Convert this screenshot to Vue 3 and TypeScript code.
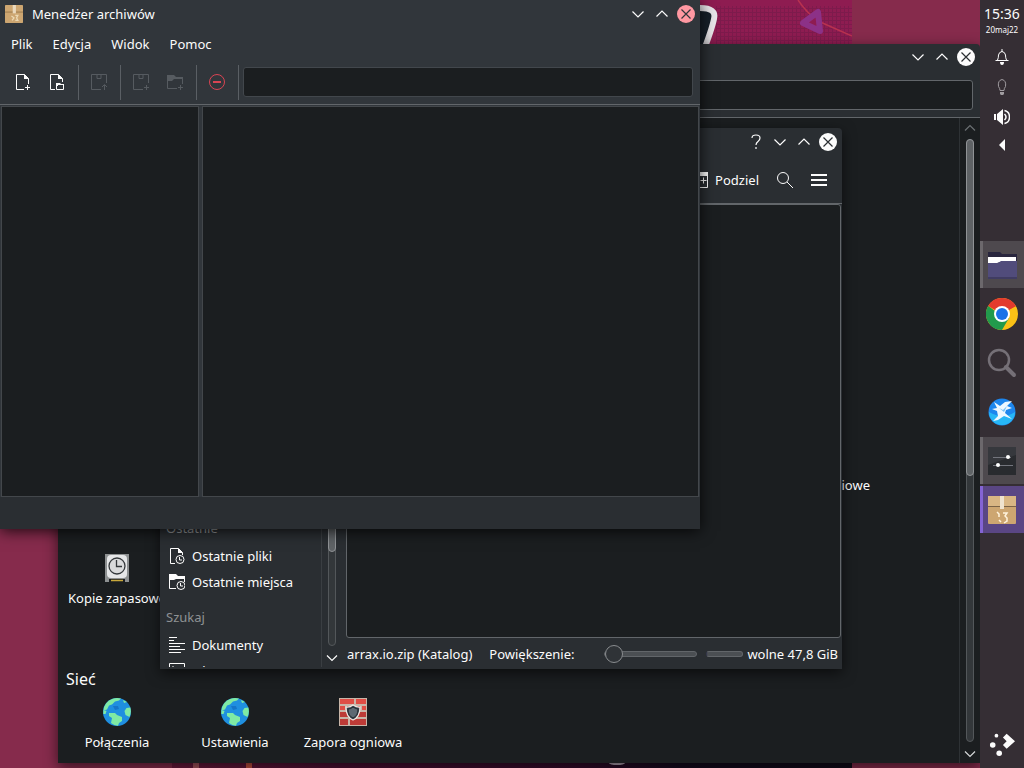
<script setup lang="ts">
import { ref } from 'vue'

interface Module {
  label: string
  icon: 'clock' | 'globe' | 'wall' | 'none'
}

const menus: string[] = ['Plik', 'Edycja', 'Widok', 'Pomoc']

const backupRow: Module[] = [{ label: 'Kopie zapasowe', icon: 'clock' }]

const networkRow: Module[] = [
  { label: 'Połączenia', icon: 'globe' },
  { label: 'Ustawienia', icon: 'globe' },
  { label: 'Zapora ogniowa', icon: 'wall' },
]

const rows: Module[][] = [backupRow, networkRow]

const address = ref('')
const query = ref('')
const zoom = ref(0)
</script>

<template>
  <div class="desktop">
    <svg class="wallpaper" viewBox="0 0 680 768" preserveAspectRatio="none" aria-hidden="true">
      <defs>
        <pattern id="dots" width="4" height="4" patternUnits="userSpaceOnUse">
          <rect width="4" height="4" fill="#8e1c51" />
          <rect width="1" height="4" fill="#7d1b4c" />
          <rect width="4" height="1" fill="#7d1b4c" />
        </pattern>
        <linearGradient id="base">
          <stop offset="0" stop-color="#6b1a3d" />
          <stop offset="0.25" stop-color="#4a0f32" />
          <stop offset="0.6" stop-color="#320b2a" />
          <stop offset="0.75" stop-color="#140a1e" />
          <stop offset="1" stop-color="#100a18" />
        </linearGradient>
      </defs>
      <rect width="680" height="700" fill="#8e1c51" />
      <rect x="544" y="6" width="136" height="50" fill="url(#dots)" />
      <rect y="700" width="680" height="68" fill="url(#base)" />
      <path d="M510 8 h18 q17 0 14 11 q-2 10 -12 36 h-20z" fill="#17202a" />
      <path d="M510 8 h18 q17 0 14 11 q-2 10 -12 36" fill="none" stroke="#e9e6ea" stroke-width="6" />
      <path d="M626 0 q8 12 20 21 L680 36" fill="none" stroke="#b8324f" stroke-width="1.500" />
      <path d="M631 23 L646 12 L648 31 Z" fill="#8e1c51" stroke="#8c3187" stroke-width="6" stroke-linejoin="round" />
      <path d="M21 762h6v6h-6z" fill="#a8555f" />
      <path d="M74 762h6v6h-6z" fill="#c05040" />
      <ellipse cx="445" cy="763" rx="8" ry="2" fill="#b8a8b8" />
    </svg>

    <main class="workspace">
      <section class="window settings" aria-label="Ustawienia systemowe">
        <header class="titlebar">
          <button class="ctl" aria-label="Minimalizuj"><svg viewBox="0 0 18 18"><path d="M3.500 6.500 9 12l5.500-5.500" /></svg></button>
          <button class="ctl" aria-label="Maksymalizuj"><svg viewBox="0 0 18 18"><path d="M3.500 11.500 9 6l5.500 5.500" /></svg></button>
          <button class="ctl close" aria-label="Zamknij"><svg viewBox="0 0 18 18"><path d="M4.500 4.500l9 9M13.500 4.500l-9 9" /></svg></button>
        </header>
        <div class="searchbar">
          <input v-model="query" type="text" aria-label="Szukaj" />
        </div>
        <div class="modules">
          <div class="modules-list">
            <div class="grid">
              <div class="module wide"><span>iowe</span></div>
            </div>
            <template v-for="(row, r) in rows" :key="r">
              <h2 v-if="r === 1">Sieć</h2>
              <div class="grid" :class="{ last: r === 1 }">
                <a v-for="m in row" :key="m.label" class="module" href="#">
                  <svg v-if="m.icon === 'clock'" class="micon" viewBox="0 0 28 28" aria-hidden="true">
                    <path d="M2 0h24v28h-4v-3H6v3H2z" fill="#8d9091" />
                    <rect x="4" y="1" width="20" height="23" rx="4" fill="#e6e7e8" />
                    <path d="M8 26.500h12" stroke="#c9a93c" stroke-width="1.500" />
                    <circle cx="14" cy="12" r="8" fill="#dadbdc" stroke="#34383b" stroke-width="1.300" />
                    <path d="M13.500 6v6.500H19" fill="none" stroke="#34383b" stroke-width="1.300" />
                  </svg>
                  <svg v-else-if="m.icon === 'globe'" class="micon" viewBox="0 0 28 28" aria-hidden="true">
                    <circle cx="14" cy="14" r="14" fill="#1f8fe0" />
                    <path d="M3 5.500 A14 14 0 0 1 18 .6 l-2 2-4 1-3 3-3 1-2 4-3.500 1 Q1 8 3 5.500z" fill="#7feaa4" />
                    <path d="M20 2 l4 2-3 1z" fill="#7feaa4" />
                    <path d="M.5 12l3 1-1 3L.3 16z" fill="#7feaa4" />
                    <path d="M6 15l6 0 2 2 5 2 0 4-3 2-1 2.800 A14 14 0 0 1 8 25 l1-5-3-2z" fill="#7feaa4" />
                    <path d="M27.300 9.500 A14 14 0 0 1 26.500 19 l-4-2-1-4 2-3z" fill="#7feaa4" />
                    <path d="M10 8l5 0 1 3-4 1z" fill="#1676c9" />
                  </svg>
                  <svg v-else class="micon" viewBox="0 0 28 28" aria-hidden="true">
                    <rect width="28" height="28" fill="#c8b5a8" />
                    <path d="M1 1h14v5H1zM17 1h10v5H17zM1 8h5v4H1zM8 8h13v4H8zM23 8h4v4h-4z" fill="#df4d45" />
                    <path d="M1 14h11v5H1zM14 14h13v5H14zM1 21h8v6H1zM11 21h16v6H11z" fill="#bd3b37" />
                    <path d="M14 7q4 2.500 7 2 0 10-7 13-7-3-7-13 4 .5 7-2z" fill="#34424d" stroke="#f1e8e4" stroke-width="1.200" />
                    <path d="M14 9q3 2 5 2 0 7-5 9-5-2-5-9 3 0 5-2z" fill="#5d6973" stroke="#222a30" stroke-width="1" />
                  </svg>
                  <span>{{ m.label }}</span>
                </a>
              </div>
            </template>
          </div>
          <div class="scroll outer">
            <svg class="arrow dim" viewBox="0 0 14 18"><path d="M2 11.500 7 6.500l5 5" /></svg>
            <div class="track"><div class="thumb"></div></div>
            <svg class="arrow" viewBox="0 0 14 18"><path d="M2 6.500l5 5 5-5" /></svg>
          </div>
        </div>
      </section>

      <section class="window files" aria-label="Dolphin">
        <header class="titlebar">
          <button class="ctl" aria-label="Pomoc"><svg viewBox="0 0 18 18"><path d="M5 5q0-3 4-3t4 3q0 2-2 3.500T9 12M9 14v2" /></svg></button>
          <button class="ctl" aria-label="Minimalizuj"><svg viewBox="0 0 18 18"><path d="M3.500 6.500 9 12l5.500-5.500" /></svg></button>
          <button class="ctl" aria-label="Maksymalizuj"><svg viewBox="0 0 18 18"><path d="M3.500 11.500 9 6l5.500 5.500" /></svg></button>
          <button class="ctl close" aria-label="Zamknij"><svg viewBox="0 0 18 18"><path d="M4.500 4.500l9 9M13.500 4.500l-9 9" /></svg></button>
        </header>
        <div class="filebar">
          <button class="split">
            <svg viewBox="0 0 16 16"><path d="M0 .5h15.500v15H0" /><path class="solid" d="M0 0h16v4H0z" /><path d="M11.500 5.500v6M8.500 8.500h6" /></svg>
            Podziel
          </button>
          <button class="tool" aria-label="Znajdź"><svg viewBox="0 0 16 16"><circle cx="6" cy="6" r="5.500" /><path d="M10 10l6 6" /></svg></button>
          <button class="tool" aria-label="Menu"><svg viewBox="0 0 16 16"><path class="solid" d="M0 2h16v2H0zM0 7h16v2H0zM0 12h16v2H0z" /></svg></button>
        </div>
        <div class="files-body">
          <aside class="places">
            <div class="places-list">
              <h3>Ostatnie</h3>
              <a href="#"><svg viewBox="0 0 16 16"><path d="M6 15.500H1.500V.5h8l4 4V7" /><path class="solid" d="M9 0l5 5H9z" /><circle cx="11" cy="11.500" r="4" /><path d="M10.500 9v3h2.500" /></svg>Ostatnie pliki</a>
              <a href="#"><svg viewBox="0 0 16 16"><path d="M7 14.500H.5V2" /><path class="solid" d="M0 0h7l2 2h7v3H7L5 6H0z" /><path d="M15.500 3v5" /><circle cx="12" cy="11.500" r="4" /><path d="M11.500 9v3H14" /></svg>Ostatnie miejsca</a>
              <h3 class="gap">Szukaj</h3>
              <a href="#"><svg viewBox="0 0 16 16"><path d="M0 .5h8M0 3.500h5M0 6.500h16M0 9.500h11M0 12.500h16M0 15.500h12" /></svg>Dokumenty</a>
              <a href="#"><svg viewBox="0 0 16 16"><path d="M.5.5h15v14H.5zM3 4h2" /></svg>Obrazy</a>
            </div>
            <div class="scroll inner">
              <div class="track"><div class="thumb"></div></div>
              <svg class="arrow" viewBox="0 0 14 18"><path d="M2 6.500l5 5 5-5" /></svg>
            </div>
          </aside>
          <div class="files-main">
            <div class="view"></div>
            <footer class="status">
              <span>arrax.io.zip (Katalog)</span>
              <label for="zoom">Powiększenie:</label>
              <input id="zoom" v-model="zoom" type="range" min="0" max="16" />
              <span class="capacity"></span>
              <span>wolne 47,8 GiB</span>
            </footer>
          </div>
        </div>
      </section>

      <section class="window ark" aria-labelledby="ark-title">
        <header class="titlebar">
          <svg class="appicon" viewBox="0 0 28 28" aria-hidden="true">
            <rect width="28" height="28" rx="1" fill="#cda671" />
            <path d="M0 11h28" stroke="#9c7a4d" stroke-width="1.500" />
            <path d="M12 0h5v13h-5z" fill="#ead9bd" />
            <path d="M10 17l4 3-3 4M16 16h4l-2 4 2 4h-4" fill="none" stroke="#ecd9b4" stroke-width="2" />
          </svg>
          <h1 id="ark-title">Menedżer archiwów</h1>
          <button class="ctl" aria-label="Minimalizuj"><svg viewBox="0 0 18 18"><path d="M3.500 6.500 9 12l5.500-5.500" /></svg></button>
          <button class="ctl" aria-label="Maksymalizuj"><svg viewBox="0 0 18 18"><path d="M3.500 11.500 9 6l5.500 5.500" /></svg></button>
          <button class="ctl close hot" aria-label="Zamknij"><svg viewBox="0 0 18 18"><path d="M4.500 4.500l9 9M13.500 4.500l-9 9" /></svg></button>
        </header>
        <nav class="menubar">
          <button v-for="m in menus" :key="m">{{ m }}</button>
        </nav>
        <div class="toolbar">
          <button class="tool" aria-label="Nowe"><svg viewBox="0 0 16 16"><path d="M9 15.500H1.500V.5h8l4 4V10" /><path class="solid" d="M9 0l5 5H9z" /><path d="M12.500 11v5M10 13.500h5" /></svg></button>
          <button class="tool" aria-label="Otwórz"><svg viewBox="0 0 16 16"><path d="M6 15.500H1.500V.5h8l4 4V8" /><path class="solid" d="M9 0l5 5H9z" /><path d="M7.500 15.500v-6h3l1 1h3v5z" /><path class="solid" d="M7 9h4l1 1h3v1H9v1H7z" /></svg></button>
          <i class="sep"></i>
          <button class="tool" disabled aria-label="Wypakuj"><svg viewBox="0 0 16 16"><path d="M10 15.500H.5V.5h15V9M6 .5v4h4v-4M13.500 16v-5M11 13l2.500-2.500L16 13" /></svg></button>
          <i class="sep"></i>
          <button class="tool" disabled aria-label="Dodaj pliki"><svg viewBox="0 0 16 16"><path d="M10 15.500H.5V.5h15V9M6 .5v4h4v-4M13.500 11v5M11 13.500h5" /></svg></button>
          <button class="tool" disabled aria-label="Dodaj katalog"><svg viewBox="0 0 16 16"><path d="M10 14.500H.5V2M15.500 3v7M13.500 11v5M11 13.500h5" /><path class="solid" d="M0 1h7l2 2h7v2H7L5 7H0z" /></svg></button>
          <i class="sep"></i>
          <button class="tool danger" aria-label="Usuń"><svg viewBox="0 0 16 16"><circle cx="8" cy="8" r="7.500" /><path d="M4 8h8" stroke-width="2" /></svg></button>
          <i class="sep"></i>
          <input v-model="address" type="text" aria-label="Wyszukaj w archiwum" />
        </div>
        <div class="ark-body">
          <div class="pane side"></div>
          <div class="pane"></div>
        </div>
        <footer class="ark-status"></footer>
      </section>
    </main>

    <aside class="panel">
      <time class="clock"><b>15:36</b><small>20maj22</small></time>
      <button class="tray" aria-label="Powiadomienia"><svg viewBox="0 0 16 16"><path d="M1.500 11.500h13M3.500 11q1-2 1-5 .5-3 3.500-3.500 3 .5 3.500 3.500 0 3 1 5M8 0v3" /><path class="solid" d="M6 13h4q0 3-2 3t-2-3z" /></svg></button>
      <button class="tray dimmed" aria-label="Jasność"><svg viewBox="0 0 16 16"><path d="M6 11.500q0-2-1.500-4-1-6 3.500-7 4.500 1 3.500 7-1.500 2-1.500 4z" /><path class="solid" d="M6 13h4v2l-1 1H7l-1-1z" /></svg></button>
      <button class="tray" aria-label="Głośność"><svg viewBox="0 0 16 16"><path class="solid" d="M0 5h2v6H0zM3 5l6-5v16l-6-5z" /><path d="M10.500 5q3 3 0 6M10.500 1.500q5 1 5 6.500t-5 6.500" stroke-width="1.500" /></svg></button>
      <button class="tray small" aria-label="Więcej"><svg viewBox="0 0 16 16"><path class="solid" d="M11 2v12L5 8z" /></svg></button>
      <div class="tasks">
        <button class="task open" aria-label="Dolphin">
          <svg class="app" viewBox="0 0 32 32">
            <path d="M2 3h12l2 2h15v22H2z" fill="#29263e" />
            <path d="M2 8h28v5H14l-3 1H2z" fill="#fff" />
            <path d="M2 14h10l3-2h16v18H2z" fill="#514c7b" />
            <path d="M2 29h29" stroke="#302d4b" stroke-width="1" />
          </svg>
        </button>
        <button class="task" aria-label="Chrome">
          <svg class="app" viewBox="0 0 32 32">
            <circle cx="16" cy="16" r="16" fill="#fbc116" />
            <path d="M16 16 L2.140 8 A16 16 0 0 1 29.860 8 z" fill="#e33b2e" />
            <path d="M16 8h13.860L22 12z" fill="#e33b2e" />
            <path d="M2.140 8 A16 16 0 0 0 16 32 l7-12 -7-2z" fill="#229a4c" />
            <circle cx="16" cy="16" r="8" fill="#fff" />
            <circle cx="16" cy="16" r="6" fill="#1b72e8" />
          </svg>
        </button>
        <button class="task" aria-label="Szukaj">
          <svg class="app" viewBox="0 0 32 32" fill="none" stroke="#757077"><circle cx="13" cy="13" r="10" stroke-width="2.500" /><path d="M20 20l8 8" stroke-width="4" stroke-linecap="round" /></svg>
        </button>
        <button class="task" aria-label="Falkon">
          <svg class="app" viewBox="0 0 32 32">
            <circle cx="16" cy="16" r="13.500" fill="#1d86ed" />
            <path d="M3 16A13 13 0 0 0 29 16q-12 8-26 0z" fill="#27b7f6" />
            <path d="M8 6l6 4 5-4 7-1-5 5 5 2-6 2-1 3 7 6-8-3-6 4-5 1 5-5-1-5-5-2 5-1z" fill="#eef8ff" />
            <path d="M13 12l4 2 4-4-3 6z" fill="#78bff5" />
          </svg>
        </button>
        <button class="task open" aria-label="Ustawienia systemowe">
          <svg class="app" viewBox="0 0 32 32">
            <rect x="2" y="2" width="28" height="28" fill="#292b2f" />
            <path d="M2 2h28v8L2 20z" fill="#36383d" />
            <path d="M7 12.500h18M7 20.500h20" stroke="#73757d" />
            <circle cx="22" cy="12" r="2" fill="#fff" /><circle cx="12" cy="20" r="2" fill="#fff" />
          </svg>
        </button>
        <button class="task open active" aria-label="Ark">
          <svg class="app" viewBox="0 0 32 32">
            <rect x="2" y="2" width="28" height="28" rx="1" fill="#cda671" />
            <path d="M2 2h28v10H2z" fill="#d9b684" />
            <path d="M2 12.500h28" stroke="#7b6347" />
            <path d="M14 2h4v13h-4z" fill="#efe3cf" />
            <path d="M11 18l2 2v3M17 19h4l-2 3 2 2v3l-3 2M13 26l2 2" fill="none" stroke="#fff3dc" stroke-width="1.500" />
          </svg>
        </button>
      </div>
      <button class="launcher" aria-label="Menu programów">
        <svg viewBox="0 0 28 28"><circle cx="8" cy="5" r="2" /><circle cx="4" cy="15" r="3" /><circle cx="11" cy="24" r="3" /><path d="M15 7l4-4 9 8-9 8-4-4 4-4z" /></svg>
      </button>
    </aside>
  </div>
</template>

<style>
html,
body {
  margin: 0;
  background: #842b4c;
}
</style>

<style scoped>
.desktop {
  position: relative;
  display: flex;
  height: 100vh;
  overflow: hidden;
  background: #862b4c;
  color: #fcfcfc;
  font: 13px/18px "Noto Sans", sans-serif;
}
* { box-sizing: border-box; }
button, input { font: inherit; color: inherit; margin: 0; }
button { background: none; border: 0; padding: 0; }
a { color: inherit; text-decoration: none; }
h1, h2, h3 { margin: 0; font-weight: 400; }
svg { display: block; flex: none; }

.wallpaper {
  position: absolute;
  top: 0;
  left: 50%;
  width: 680px;
  height: 100%;
  transform: translateX(-50%);
}
.workspace { position: relative; flex: 1; min-width: 0; overflow: hidden; }
.window {
  position: absolute;
  display: flex;
  flex-direction: column;
  overflow: hidden;
  background: #2a2e32;
  border-radius: 4px 4px 0 0;
  box-shadow: 0 4px 14px rgba(0, 0, 0, 0.6);
}
.settings { inset: 44px 0 5px 58px; }
.files { inset: 128px 138px 99px 160px; }
.ark { inset: 0 280px 239px 0; background: #31363b; border-radius: 0; box-shadow: 0 2px 14px rgba(0, 0, 0, 0.8); }

.titlebar {
  display: flex;
  align-items: center;
  justify-content: flex-end;
  gap: 6px;
  height: 28px;
  padding: 0 5px;
  flex: none;
}
.titlebar h1 { flex: 1; font-size: 13px; }
.settings .titlebar { height: 26px; }
.appicon { width: 18px; height: 18px; margin-right: 3px; }
.ctl { width: 18px; height: 18px; border-radius: 50%; }
.ctl svg { width: 18px; height: 18px; fill: none; stroke: #fcfcfc; stroke-width: 1.2; }
.close { background: #fcfcfc; }
.close svg { stroke: #2a2e32; }
.close.hot { background: #ff98a2; }
.close.hot svg { stroke: #31363b; }

.searchbar { padding: 10px 7px 7px; border-bottom: 1px solid #62666a; }
.searchbar input {
  display: block;
  width: 100%;
  height: 30px;
  background: #1b1e20;
  border: 1px solid #62666a;
  border-radius: 3px;
}
.modules { flex: 1; display: flex; min-height: 0; background: #1b1e20; }
.modules-list {
  flex: 1;
  display: flex;
  flex-direction: column;
  justify-content: flex-end;
  padding-bottom: 12px;
  border-right: 1px solid #2e3235;
}
.modules-list h2 { padding-left: 8px; margin-bottom: 7px; font-size: 16px; line-height: 24px; }
.grid { display: grid; grid-template-columns: repeat(auto-fill, 118px); grid-auto-rows: 113px; }
.grid.last { grid-auto-rows: 53px; }
.module { display: flex; flex-direction: column; align-items: center; gap: 7px; white-space: nowrap; }
.module.wide { grid-column: 7; align-items: flex-end; padding: 35px 14px 0 0; }
.micon { width: 28px; height: 28px; }

.scroll { display: flex; flex-direction: column; align-items: center; flex: none; width: 20px; }
.arrow { width: 14px; height: 18px; fill: none; stroke: #d5d7d8; stroke-width: 1.2; }
.arrow.dim { stroke: #6b6f72; }
.track { flex: 1; width: 8px; border: 1px solid #53575a; border-radius: 4px; background: #33373a; }
.outer { padding-top: 1px; }
.outer .track { margin: 2px 0 3px; }
.thumb { height: 56%; width: 8px; margin: -1px; border: 1px solid #909396; border-radius: 4px; background: #5f6366; }

.filebar {
  display: flex;
  align-items: center;
  justify-content: flex-end;
  gap: 18px;
  height: 48px;
  padding-right: 15px;
  flex: none;
  border-bottom: 1px solid #62666a;
}
.split { display: flex; align-items: center; gap: 7px; }
.split svg, .tool svg, .tray svg, .places svg {
  fill: none;
  stroke: currentColor;
}
.split svg, .filebar .tool svg { width: 16px; height: 16px; }
.solid { fill: currentColor; stroke: none; }
.files-body { flex: 1; display: flex; min-height: 0; }
.places { display: flex; width: 186px; padding-bottom: 2px; flex: none; }
.places-list {
  flex: 1;
  display: flex;
  flex-direction: column;
  justify-content: flex-end;
  overflow: hidden;
  padding-left: 6px;
  border-right: 1px solid #3a3e42;
}
.places-list > * { flex: none; }
.places-list h3 { margin-bottom: 2px; font-size: 13px; line-height: 26px; color: #8f9294; }
.places-list h3.gap { margin-top: 9px; }
.places-list a { display: flex; align-items: center; gap: 7px; height: 26px; padding-left: 3px; }
.places-list a:last-child { margin-bottom: -17px; }
.places-list svg { width: 16px; height: 16px; }
.inner { margin-right: 4px; }
.inner .track { margin: 2px 0 3px; }
.inner .thumb { height: 79%; }
.files-main { flex: 1; display: flex; flex-direction: column; min-width: 0; }
.view { flex: 1; margin-right: 1px; background: #1b1e20; border: 1px solid #62666a; border-radius: 3px; }
.status { display: flex; align-items: center; height: 31px; padding: 0 4px 0 1px; white-space: nowrap; }
.status label { margin: 0 29px 0 17px; }
.status input { flex: 1; min-width: 0; height: 20px; margin: 0 9px 0 0; appearance: none; background: none; }
.status input::-webkit-slider-runnable-track { height: 6px; background: #4b4f53; border: 1px solid #62666a; border-radius: 3px; }
.status input::-webkit-slider-thumb {
  appearance: none;
  width: 18px;
  height: 18px;
  margin-top: -7px;
  background: #2f3337;
  border: 1px solid #898c8f;
  border-radius: 50%;
}
.capacity { width: 37px; height: 6px; margin-right: 4px; background: #4b4f53; border: 1px solid #62666a; border-left-color: #35384c; border-radius: 3px; }

.menubar { display: flex; gap: 20px; height: 33px; padding: 0 11px 2px; flex: none; }
.toolbar {
  display: flex;
  align-items: center;
  gap: 8px;
  height: 44px;
  padding: 0 7px 1px 10px;
  flex: none;
  border-bottom: 1px solid #62666a;
}
.toolbar .tool { width: 26px; height: 26px; display: grid; place-items: center; }
.toolbar .tool svg { width: 16px; height: 16px; }
.tool:disabled { color: #565b60; }
.danger { color: #da4453; }
.sep { width: 1px; height: 35px; margin-right: -1px; background: #5a5f64; }
.toolbar input { flex: 1; min-width: 0; height: 30px; margin-left: -3px; background: #1b1e20; border: 1px solid #42474c; border-radius: 3px; }
.ark-body { flex: 1; display: flex; gap: 3px; padding: 1px 1px 0; min-height: 0; }
.pane { flex: 1; background: #1b1e20; border: 1px solid #43474b; }
.pane.side { flex: 0 0 198px; }
.ark-status { height: 32px; flex: none; background: #2a2e32; }

.panel {
  position: relative;
  display: flex;
  flex-direction: column;
  align-items: center;
  flex: none;
  width: 44px;
  padding-bottom: 10px;
  background: #352e34;
}
.clock { display: flex; flex-direction: column; align-items: center; padding: 4px 0; }
.clock b { font-weight: 400; font-size: 14px; line-height: 20px; }
.clock small { font-size: 8px; line-height: 12px; }
.tray { width: 44px; height: 30px; display: grid; place-items: center; flex: none; }
.clock + .tray { margin-top: 2px; }
.tray svg { width: 16px; height: 16px; }
.tray.small { height: 26px; }
.dimmed { color: #a09ca0; }
.tasks { display: flex; flex-direction: column; gap: 2px; margin-top: 83px; }
.task { width: 44px; height: 47px; display: grid; place-items: center; }
.task.open { background: #4e494e; border-left: 3px solid #6c686c; padding-right: 3px; }
.task.active { background: #5a4684; border-left-color: #8464d4; }
.app { width: 32px; height: 32px; }
.launcher { margin-top: auto; }
.launcher svg { width: 26px; height: 28px; fill: #fcfcfc; }
</style>
